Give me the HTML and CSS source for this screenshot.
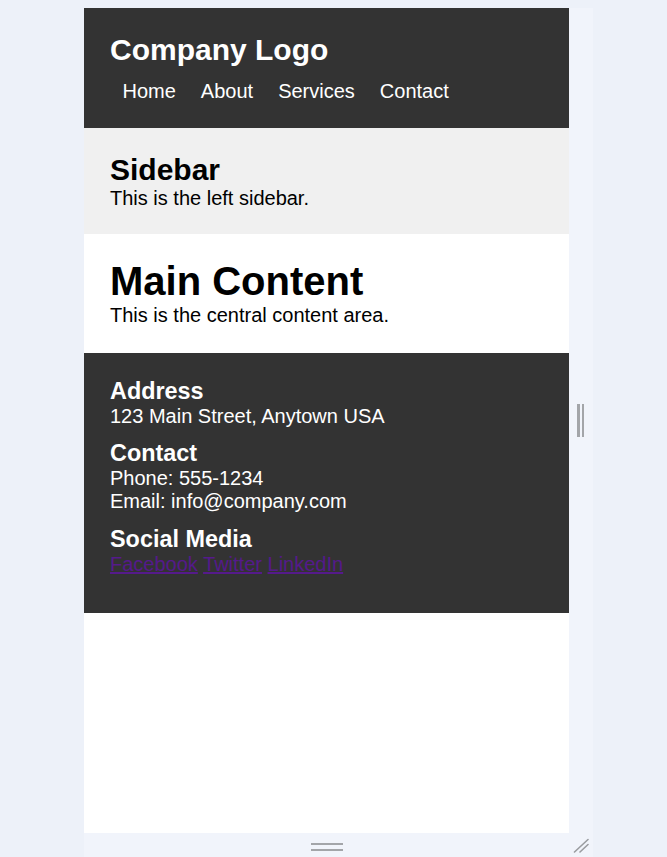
FILE: index.html
```html
<!DOCTYPE html>
<html lang="en">
<head>
<meta charset="utf-8">
<title>Company</title>
<link rel="stylesheet" href="styles.css">
</head>
<body>
<div class="stage">
  <div class="frame">
    <div class="viewport">
      <header class="site-header">
        <h1 class="logo">Company Logo</h1>
        <nav>
          <ul class="nav">
            <li><a href="#">Home</a></li>
            <li><a href="#">About</a></li>
            <li><a href="#">Services</a></li>
            <li><a href="#">Contact</a></li>
          </ul>
        </nav>
      </header>
      <aside class="sidebar">
        <h2>Sidebar</h2>
        <p>This is the left sidebar.</p>
      </aside>
      <main class="main">
        <h1>Main Content</h1>
        <p>This is the central content area.</p>
      </main>
      <footer class="site-footer">
        <section class="f-sec">
          <h3>Address</h3>
          <p>123 Main Street, Anytown USA</p>
        </section>
        <section class="f-sec">
          <h3>Contact</h3>
          <p>Phone: 555-1234</p>
          <p>Email: info@company.com</p>
        </section>
        <section class="f-sec">
          <h3>Social Media</h3>
          <p><a class="social" href="#">Facebook</a> <a class="social" href="#">Twitter</a> <a class="social" href="#">LinkedIn</a></p>
        </section>
      </footer>
    </div>
    <div class="grip-right"><span></span><span></span></div>
    <div class="grip-bottom"><span></span><span></span></div>
    <div class="grip-corner">
      <svg width="16" height="15" viewBox="0 0 16 15"><path d="M1.5 14 L15 1.5 M7 14 L15 6.5" stroke="#9a9ca0" stroke-width="1.6" fill="none" stroke-linecap="round"/></svg>
    </div>
  </div>
</div>
</body>
</html>
```

FILE: styles.css
```css
html, body {
  margin: 0;
  padding: 0;
}
body {
  background: #edf1f9;
  font-family: "Liberation Sans", Arial, sans-serif;
  height: 857px;
  overflow: hidden;
}
.stage {
  padding: 8px 0 0 84px;
}
.frame {
  display: grid;
  grid-template-columns: 485px 24px;
  grid-template-rows: 825px 24px;
  width: 509px;
  background: #f1f4fb;
}
.viewport {
  background: #ffffff;
  font-size: 20px;
  color: #000;
  overflow: hidden;
}
.site-header {
  background: #333333;
  color: #ffffff;
  padding: 25px 25px 25px 26px;
}
.logo {
  margin: 0 0 12.5px 0;
  font-size: 30px;
  font-weight: bold;
}
.nav {
  list-style: none;
  margin: 0;
  padding: 0;
  display: flex;
}
.nav li {
  margin: 0 12.5px;
}
.nav a {
  color: #ffffff;
  text-decoration: none;
}
.sidebar {
  background: #f0f0f0;
  padding: 25px 25px 24px 26px;
}
.sidebar h2 {
  margin: 0;
  font-size: 30px;
}
.sidebar p, .main p {
  margin: 0;
}
.main {
  padding: 25px 25px 26px 26px;
}
.main h1 {
  margin: 0;
  font-size: 40px;
}
.site-footer {
  background: #333333;
  color: #ffffff;
  padding: 25px 25px 25px 26px;
}
.f-sec {
  margin-bottom: 12.5px;
}
.f-sec h3 {
  margin: 0;
  font-size: 23.4px;
}
.f-sec p {
  margin: 0;
}
.social {
  color: #551a8b;
}
.grip-right {
  display: flex;
  justify-content: center;
  align-items: center;
  gap: 2px;
  padding-right: 1px;
}
.grip-right span {
  width: 2.5px;
  height: 33px;
  background: #a3a5a9;
}
.grip-bottom {
  display: flex;
  flex-direction: column;
  align-items: center;
  justify-content: center;
  gap: 4px;
  padding-top: 4px;
}
.grip-bottom span {
  width: 32px;
  height: 2px;
  background: #a3a5a9;
}
.grip-corner {
  display: flex;
  align-items: flex-end;
  justify-content: flex-start;
  padding: 0 0 4px 4px;
}
.grip-corner svg {
  display: block;
}
```
